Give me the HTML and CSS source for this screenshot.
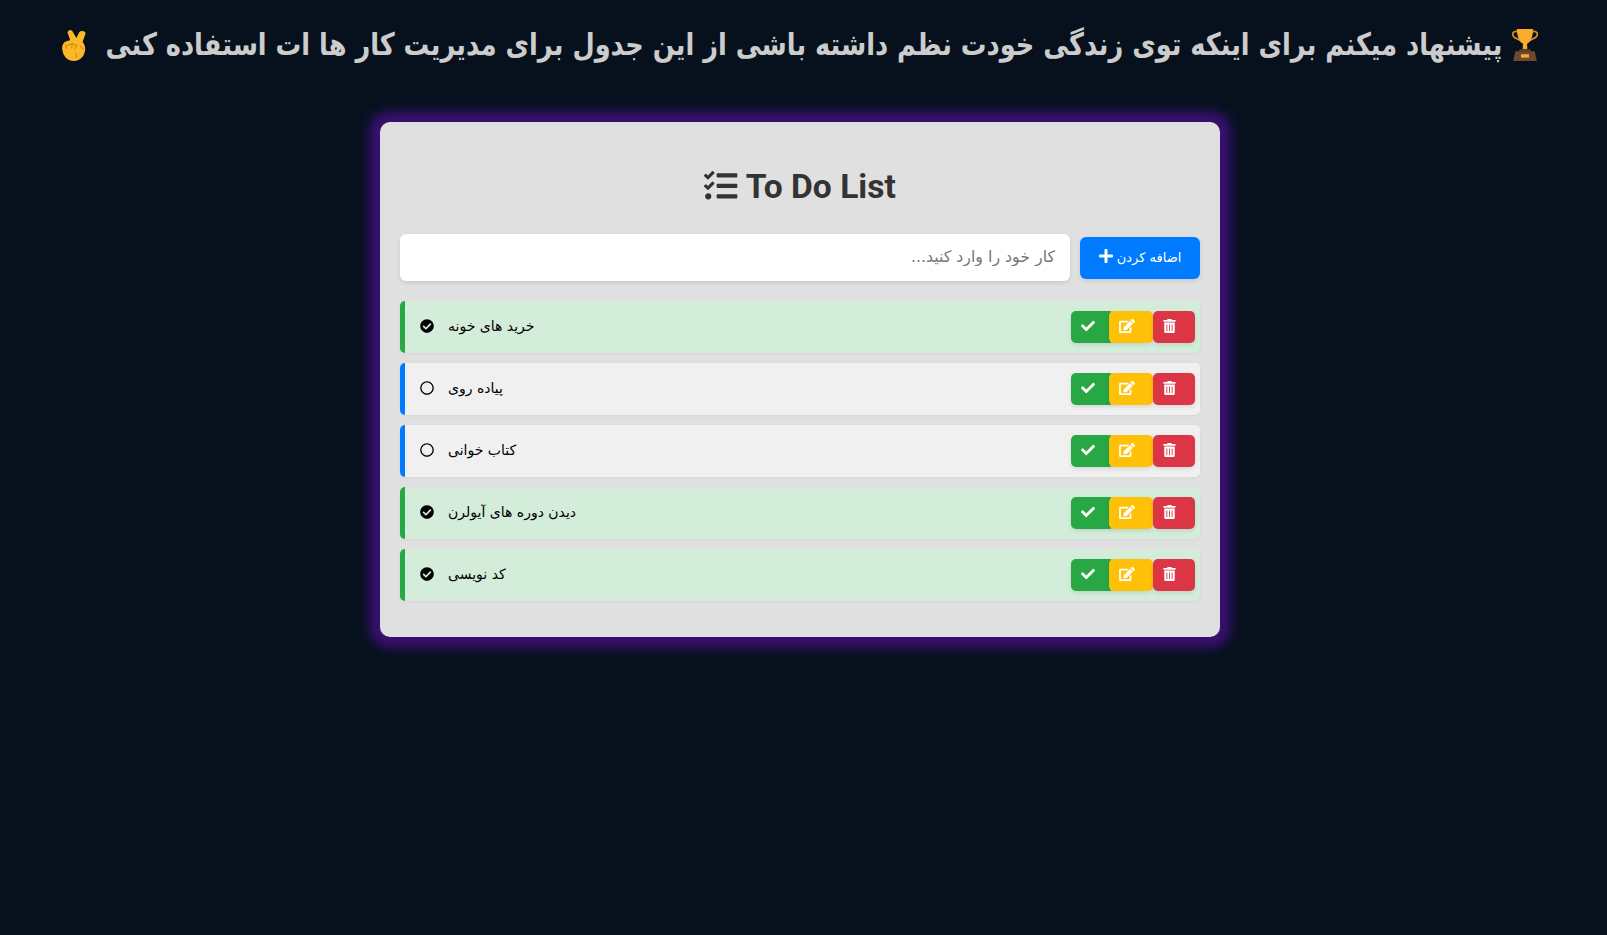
FILE: index.html
```html
<!DOCTYPE html>
<html lang="fa">
<head>
<meta charset="utf-8">
<title>To Do List</title>
<link rel="stylesheet" href="styles.css">
</head>
<body>
<svg class="sprite" xmlns="http://www.w3.org/2000/svg">
  <symbol id="i-check" viewBox="0 0 512 512"><path d="M173.898 439.404l-166.4-166.4c-9.997-9.997-9.997-26.206 0-36.204l36.203-36.204c9.997-9.998 26.207-9.998 36.204 0L192 312.69 432.095 72.596c9.997-9.997 26.207-9.997 36.204 0l36.203 36.204c9.997 9.997 9.997 26.206 0 36.204l-294.4 294.401c-9.998 9.997-26.207 9.997-36.204-.001z"/></symbol>
  <symbol id="i-plus" viewBox="0 0 448 512"><path d="M416 208H272V64c0-17.67-14.33-32-32-32h-32c-17.67 0-32 14.33-32 32v144H32c-17.67 0-32 14.33-32 32v32c0 17.67 14.33 32 32 32h144v144c0 17.67 14.33 32 32 32h32c17.67 0 32-14.33 32-32V304h144c17.67 0 32-14.33 32-32v-32c0-17.67-14.33-32-32-32z"/></symbol>
  <symbol id="i-edit" viewBox="0 0 576 512"><path d="M402.6 83.2l90.2 90.2c3.8 3.8 3.8 10 0 13.8L274.4 405.6l-92.8 10.3c-12.4 1.4-22.9-9.1-21.5-21.5l10.3-92.8L388.8 83.2c3.8-3.8 10-3.8 13.8 0zm162-22.9l-48.8-48.8c-15.2-15.2-39.9-15.2-55.2 0l-35.4 35.4c-3.8 3.8-3.8 10 0 13.8l90.2 90.2c3.8 3.8 10 3.8 13.8 0l35.4-35.4c15.2-15.3 15.2-40 0-55.2zM384 346.2V448H64V128h229.8c3.2 0 6.2-1.3 8.5-3.5l40-40c7.6-7.6 2.2-20.5-8.5-20.5H48C21.5 64 0 85.5 0 112v352c0 26.5 21.5 48 48 48h352c26.5 0 48-21.5 48-48V306.2c0-10.7-12.9-16-20.5-8.5l-40 40c-2.2 2.3-3.5 5.3-3.5 8.5z"/></symbol>
  <symbol id="i-trash" viewBox="0 0 448 512"><path d="M32 464a48 48 0 0 0 48 48h288a48 48 0 0 0 48-48V128H32zm272-256a16 16 0 0 1 32 0v224a16 16 0 0 1-32 0zm-96 0a16 16 0 0 1 32 0v224a16 16 0 0 1-32 0zm-96 0a16 16 0 0 1 32 0v224a16 16 0 0 1-32 0zM432 32H312l-9.4-18.7A24 24 0 0 0 281.1 0H166.8a23.72 23.72 0 0 0-21.4 13.3L136 32H16A16 16 0 0 0 0 48v32a16 16 0 0 0 16 16h416a16 16 0 0 0 16-16V48a16 16 0 0 0-16-16z"/></symbol>
  <symbol id="i-done" viewBox="0 0 512 512"><path d="M504 256c0 136.967-111.033 248-248 248S8 392.967 8 256 119.033 8 256 8s248 111.033 248 248zM227.314 387.314l184-184c6.248-6.248 6.248-16.379 0-22.627l-22.627-22.627c-6.248-6.249-16.379-6.249-22.628 0L216 308.118l-70.059-70.059c-6.248-6.248-16.379-6.248-22.628 0l-22.627 22.627c-6.248 6.248-6.248 16.379 0 22.627l104 104c6.249 6.249 16.379 6.249 22.628.001z"/></symbol>
  <symbol id="i-open" viewBox="0 0 512 512"><path d="M256 8C119 8 8 119 8 256s111 248 248 248 248-111 248-248S393 8 256 8zm0 448c-110.5 0-200-89.5-200-200S145.5 56 256 56s200 89.5 200 200-89.5 200-200 200z"/></symbol>
  <symbol id="i-tasks" viewBox="0 0 512 512"><path d="M139.61 35.5a12 12 0 0 0-17 0L58.93 98.81l-22.7-22.12a12 12 0 0 0-17 0L3.53 92.41a12 12 0 0 0 0 17l47.59 47.4a12.78 12.78 0 0 0 17.61 0l15.59-15.62L156.52 69a12.09 12.09 0 0 0 .09-17zm0 159.19a12 12 0 0 0-17 0l-63.68 63.72-22.7-22.1a12 12 0 0 0-17 0L3.53 252a12 12 0 0 0 0 17L51 316.5a12.77 12.77 0 0 0 17.6 0l15.7-15.69 72.2-72.22a12 12 0 0 0 .09-16.9zM64 368c-26.49 0-48.59 21.5-48.59 48S37.53 464 64 464a48 48 0 0 0 0-96zm432 16H208a16 16 0 0 0-16 16v32a16 16 0 0 0 16 16h288a16 16 0 0 0 16-16v-32a16 16 0 0 0-16-16zm0-320H208a16 16 0 0 0-16 16v32a16 16 0 0 0 16 16h288a16 16 0 0 0 16-16V80a16 16 0 0 0-16-16zm0 160H208a16 16 0 0 0-16 16v32a16 16 0 0 0 16 16h288a16 16 0 0 0 16-16v-32a16 16 0 0 0-16-16z"/></symbol>
</svg>

<h1 class="banner">
  <svg class="emoji-trophy" viewBox="0 0 76 95">
    <path d="M16 8C4 4-2 14 4 22c4 6 14 8 22 14" fill="none" stroke="#d98f26" stroke-width="5"/>
    <path d="M60 8c12-4 18 6 12 14-4 6-14 8-22 14" fill="none" stroke="#d98f26" stroke-width="5"/>
    <path d="M14 0h48c0 16-4 36-18 44l1 16H31l1-16C18 36 14 16 14 0z" fill="#fbab2a"/>
    <path d="M22 60h32l2 6H20z" fill="#5f4029"/>
    <path d="M9 66h58l6 29H3z" fill="#6b4a30"/>
    <rect x="26" y="75" width="24" height="10" fill="#fbab2a"/>
  </svg>
  <span class="banner-text">پیشنهاد میکنم برای اینکه توی زندگی خودت نظم داشته باشی از این جدول برای مدیریت کار ها ات استفاده کنی</span>
  <svg class="emoji-hand" viewBox="0 0 70 93">
    <path d="M16 10C18 2 26 0 30 6l12 20 8-16c3-7 17-6 19 2l-9 26c6 6 10 18 6 30-4 16-16 25-30 25C16 93 4 80 1 60-1 48 4 36 18 34l6-1z" fill="#fbb829"/>
    <path d="M14 48l16-6 14 6-8 10M52 50l12 10M40 70l2 14M10 44l4 14M30 42l-2 14" fill="none" stroke="#d9860f" stroke-width="3"/>
  </svg>
</h1>

<main class="card">
  <h2 class="card-title">
    <svg class="title-icon"><use href="#i-tasks"/></svg>
    <span>To Do List</span>
  </h2>

  <form class="add-form">
    <input class="add-input" type="text" dir="rtl" placeholder="کار خود را وارد کنید...">
    <button class="add-btn" type="button" dir="rtl">اضافه کردن <svg class="plus-icon"><use href="#i-plus"/></svg></button>
  </form>

  <ul class="todo-list">
    <li class="todo done">
      <svg class="state-icon"><use href="#i-done"/></svg>
      <span class="todo-text">خرید های خونه</span>
      <div class="actions">
        <button class="act act-check" type="button"><svg class="ic-check"><use href="#i-check"/></svg></button>
        <button class="act act-edit" type="button"><svg class="ic-edit"><use href="#i-edit"/></svg></button>
        <button class="act act-del" type="button"><svg class="ic-del"><use href="#i-trash"/></svg></button>
      </div>
    </li>
    <li class="todo">
      <svg class="state-icon"><use href="#i-open"/></svg>
      <span class="todo-text">پیاده روی</span>
      <div class="actions">
        <button class="act act-check" type="button"><svg class="ic-check"><use href="#i-check"/></svg></button>
        <button class="act act-edit" type="button"><svg class="ic-edit"><use href="#i-edit"/></svg></button>
        <button class="act act-del" type="button"><svg class="ic-del"><use href="#i-trash"/></svg></button>
      </div>
    </li>
    <li class="todo">
      <svg class="state-icon"><use href="#i-open"/></svg>
      <span class="todo-text">کتاب خوانی</span>
      <div class="actions">
        <button class="act act-check" type="button"><svg class="ic-check"><use href="#i-check"/></svg></button>
        <button class="act act-edit" type="button"><svg class="ic-edit"><use href="#i-edit"/></svg></button>
        <button class="act act-del" type="button"><svg class="ic-del"><use href="#i-trash"/></svg></button>
      </div>
    </li>
    <li class="todo done">
      <svg class="state-icon"><use href="#i-done"/></svg>
      <span class="todo-text">دیدن دوره های آیولرن</span>
      <div class="actions">
        <button class="act act-check" type="button"><svg class="ic-check"><use href="#i-check"/></svg></button>
        <button class="act act-edit" type="button"><svg class="ic-edit"><use href="#i-edit"/></svg></button>
        <button class="act act-del" type="button"><svg class="ic-del"><use href="#i-trash"/></svg></button>
      </div>
    </li>
    <li class="todo done">
      <svg class="state-icon"><use href="#i-done"/></svg>
      <span class="todo-text">کد نویسی</span>
      <div class="actions">
        <button class="act act-check" type="button"><svg class="ic-check"><use href="#i-check"/></svg></button>
        <button class="act act-edit" type="button"><svg class="ic-edit"><use href="#i-edit"/></svg></button>
        <button class="act act-del" type="button"><svg class="ic-del"><use href="#i-trash"/></svg></button>
      </div>
    </li>
  </ul>
</main>
</body>
</html>
```

FILE: styles.css
```css
*,*::before,*::after{box-sizing:border-box;margin:0;padding:0}
html,body{height:100%}
body{
  background:#06111d;
  font-family:"DejaVu Sans",sans-serif;
  color:#000;
  padding-right:7px; /* reference keeps room for a scrollbar */
}
.sprite{display:none}

/* heading */
.banner{
  direction:rtl;
  display:flex;align-items:center;justify-content:center;
  height:90px;
  color:#ccc;
  font-size:25.65px;font-weight:700;line-height:1;
  white-space:nowrap;
}
.banner-text{display:inline-block;transform:scaleY(1.2)}
.emoji-trophy{width:26px;height:32px;margin-left:10px;flex:none}
.emoji-hand{width:24px;height:32px;margin-right:20px;flex:none}

/* card */
.card{
  width:840px;margin:32px auto 0;
  padding:45px 20px 36px;
  background:#e0e0e0;
  border-radius:10px;
  box-shadow:0 0 11px 11px #3a1070;
}
.card-title{
  display:flex;align-items:center;justify-content:center;gap:8px;
  height:38px;margin-bottom:29px;
  font-family:Roboto,sans-serif;font-size:33.6px;font-weight:700;color:#333;
}
.title-icon{width:33.6px;height:33.6px;fill:#333}

/* form */
.add-form{display:flex;align-items:center;gap:10px;margin-bottom:20px}
.add-input{
  flex:1;height:47px;padding:0 15px 2px;
  background:#fff;border:0;border-radius:6px;
  box-shadow:0 2px 4px rgba(0,0,0,.1);
  font-family:"DejaVu Sans",sans-serif;font-size:15.8px;
}
.add-input::placeholder{color:#777}
.add-btn{
  width:120px;height:42px;padding-bottom:3px;
  background:#007bff;color:#fff;border:0;border-radius:6px;
  box-shadow:0 2px 4px rgba(0,0,0,.1);
  font-family:"DejaVu Sans",sans-serif;font-size:13px;font-weight:400;
}
.plus-icon{width:14px;height:16px;fill:#fff;vertical-align:-2px}

/* list */
.todo-list{list-style:none;display:flex;flex-direction:column;gap:10px}
.todo{
  display:flex;align-items:center;
  height:52px;padding:0 5px 0 15px;
  background:#f0f0f0;
  border-left:5px solid #007bff;border-radius:5px;
  box-shadow:0 1px 3px rgba(0,0,0,.05);
}
.todo.done{background:#d4edda;border-left-color:#28a745}
.state-icon{width:14px;height:14px;margin-right:14px;flex:none;position:relative;top:-1px}
.todo-text{flex:1;font-size:14px;padding-bottom:2px}

.actions{display:flex}
.act{
  height:32px;padding:0 19px 0 10px;
  border:0;border-radius:5px;
  display:flex;align-items:center;
  box-shadow:0 2px 4px rgba(0,0,0,.1);
}
.act svg{fill:#fff;height:14px;position:relative;top:-1px}
.act-check{background:#28a745;margin-right:-5px}
.act-edit{background:#ffc107;padding-right:18px;position:relative}
.act-del{background:#dc3545;position:relative}
.ic-check{width:14px}
.ic-edit{width:16px}
.ic-del{width:13px}
```
